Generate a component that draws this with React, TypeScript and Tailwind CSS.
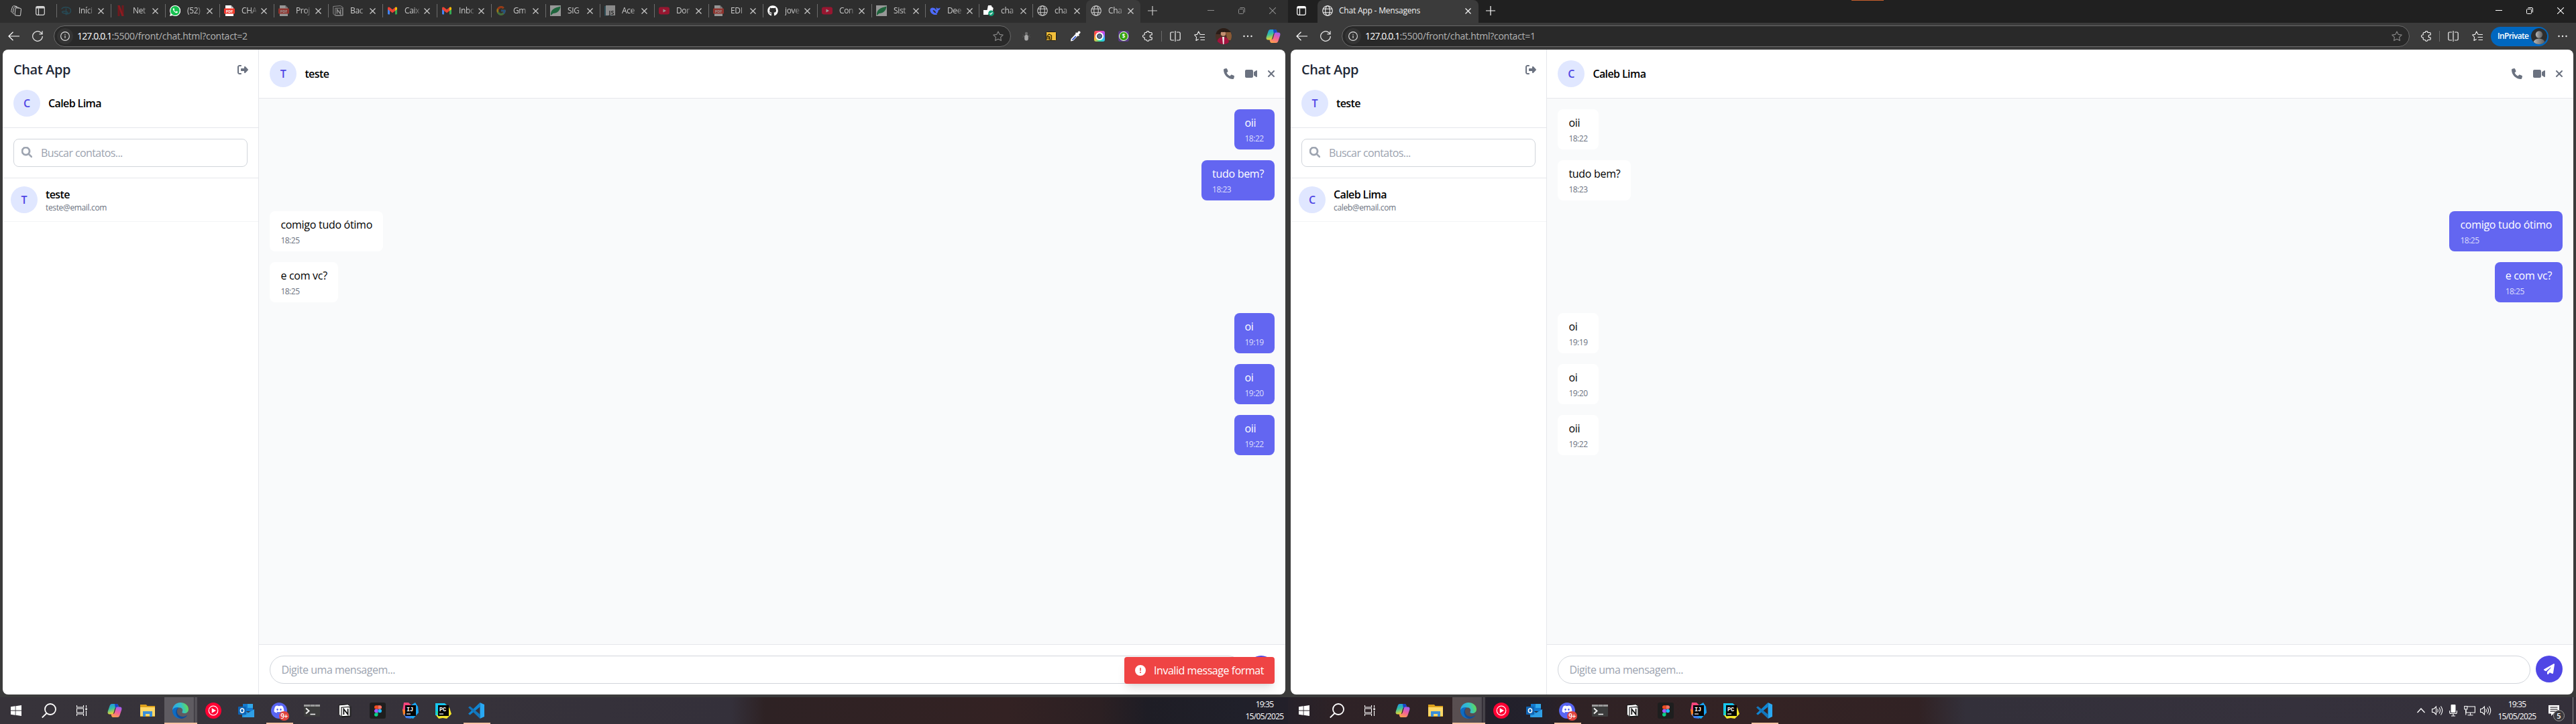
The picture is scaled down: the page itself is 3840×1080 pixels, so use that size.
import React from "react";
import type { ReactNode } from "react";
import {
  FaPhone,
  FaVideo,
  FaXmark,
  FaRightFromBracket,
  FaMagnifyingGlass,
  FaPaperPlane,
  FaCircleExclamation,
  FaGithub,
  FaDiscord,
} from "react-icons/fa6";
import { FcGoogle } from "react-icons/fc";

/* ---------- favicons ---------- */

const Netflix = () => (
  <svg viewBox="0 0 16 16" className="size-4">
    <path d="M3.500 0h3v16h-3z M9.500 0h3v16h-3z" fill="#b1060f" />
    <path d="M3.500 0h3l6 16h-3z" fill="#e50914" />
  </svg>
);
const Disney = () => (
  <svg viewBox="0 0 16 16" className="size-4" fill="none" stroke="#20677e" strokeLinecap="round">
    <path d="M1 5C4 1.500 15 2 14.500 8.500 14 13 8 13.500 6 12" strokeWidth="1.400" />
    <path d="M7.500 5v9M1.500 9.500c0 2.500 7 3.500 8.500 1.500 0-2-6-3-8.500-1.500z" strokeWidth="1.300" />
  </svg>
);
const Whatsapp = () => (
  <svg viewBox="0 0 16 16" className="size-4">
    <path d="M8 0a8 8 0 0 0-6.900 12L0 16l4.200-1.100A8 8 0 1 0 8 0z" fill="#fff" />
    <circle cx="8" cy="8" r="6.900" fill="#16c04f" />
    <path d="M5.500 4.200c-1 .6-1.100 2 .3 4 1.600 2.300 3.700 3.600 5.200 3 1-.5 1-1.500.9-1.700l-1.800-.9-1 1.100c-1-.4-2.100-1.500-2.600-2.500l.7-.9-.8-2z" fill="#fff" />
  </svg>
);
const Pdf = () => (
  <svg viewBox="0 0 16 16" className="size-4">
    <path d="M2 0h8.500L14 3.500V16H2z" fill="#fff" />
    <path d="M10.500 0v3.500H14z" fill="#9a9a9a" />
    <rect x="0" y="4.500" width="16" height="8" rx=".8" fill="#f03a2e" />
    <text x="8" y="10.800" textAnchor="middle" fontSize="5.500" fontWeight="700" fill="#fff" fontFamily="Open Sans, sans-serif">PDF</text>
  </svg>
);
const Notion = () => (
  <svg viewBox="0 0 16 16" className="size-5">
    <path d="M1 1.500 11.500.6 15 3v12l-11 .7L1 12.500z" fill="#fff" stroke="#111" strokeWidth=".8" />
    <path d="M4 4.200 14.300 3.500v11L4 15.100z" fill="#fff" stroke="#111" strokeWidth=".9" />
    <path d="M6.700 12.800V6.200l5 6.300V5.800" fill="none" stroke="#111" strokeWidth="1.400" />
  </svg>
);
const NotionTab = () => (
  <svg viewBox="0 0 16 16" className="size-4">
    <path d="M.8 1.500 11.500.6 15.200 3v12.200l-11 .4L.8 12.500z" fill="none" stroke="#ddd" strokeWidth="1" />
    <path d="M3.800 4.200h10.600v10.600H3.800z" fill="none" stroke="#ddd" strokeWidth="1" />
    <path d="M6.500 12.500V6.200l5 6.300V6" fill="none" stroke="#eee" strokeWidth="1.500" />
  </svg>
);
const Gmail = () => (
  <svg viewBox="0 0 16 16" className="size-4">
    <path d="M1 4.500h3v9H2q-1 0-1-1z" fill="#4285f4" />
    <path d="M15 4.500h-3v9h2q1 0 1-1z" fill="#34a853" />
    <path d="M1 4.200C1 2.500 2.800 2 4 3l4 3.200L12 3v5.200L8 11.200 4 8.200 1 6z" fill="#ea4335" />
    <path d="M12 3c1.200-1 3-.5 3 1.200V6l-3 2.200z" fill="#fbbc04" />
  </svg>
);
const Siga = () => (
  <svg viewBox="0 0 16 16" className="size-4">
    <rect width="16" height="16" fill="#fff" />
    <path d="M1 12C2 6 6 4 15.500 1.500 15 8 10 12 4.500 12L1 15z" fill="#0f9a4a" />
  </svg>
);
const JsFile = () => (
  <svg viewBox="0 0 16 16" className="size-4">
    <path d="M0 1h12v14.500H0z" fill="#2d6f83" />
    <path d="M2 0h14v15H2z" fill="#e8e8e8" />
    <text x="10.500" y="14" textAnchor="middle" fontSize="9" fontWeight="700" fill="#222" fontFamily="Open Sans, sans-serif">JS</text>
  </svg>
);
const Youtube = () => (
  <svg viewBox="0 0 16 16" className="size-4">
    <rect y="2.500" width="16" height="11" rx="3" fill="#ff0033" />
    <path d="M6.500 5.500 11 8l-4.500 2.500z" fill="#fff" />
  </svg>
);
const Deepseek = () => (
  <svg viewBox="0 0 16 16" className="size-4">
    <path d="M.5 7C.5 4 3.500 2.500 6.500 4c1.500.7 2.500 2 3.500 3 .3-1.500-1-2.500-.2-4 .8 1 1.700 1.700 2.900 1.500 1-.1 1.800-.8 2.800-1.100 0 2-1 3.600-2.800 3.800 0 2.800-1.200 4.300-2.700 5.300l1.200 1.300C6.500 15 .5 12.500.5 7z" fill="#4d6bfe" />
    <path d="M4.500 7c2 0 4.500 2 5 4.500C7 11.500 5 9.500 4.500 7z" fill="#2e2e2e" />
  </svg>
);
const ChatCheck = () => (
  <svg viewBox="0 0 16 16" className="size-4">
    <path d="M6.500 2.500a3 3 0 0 1 6-.3c2.600.6 2.500 3 1.600 4.300V9L6.500 14H0V7h5.500z" fill="#fff" />
    <circle cx="11.500" cy="11.700" r="4.300" fill="#0f9d73" />
    <path d="m9.500 11.800 1.400 1.500 2.600-2.800" fill="none" stroke="#fff" strokeWidth="1.200" />
  </svg>
);
const Globe = () => (
  <svg viewBox="0 0 16 16" className="size-4" fill="none" stroke="currentColor" strokeWidth="1.100">
    <circle cx="8" cy="8" r="7.300" />
    <ellipse cx="8" cy="8" rx="3.300" ry="7.300" />
    <path d="M1.300 5.300h13.400M1.300 10.700h13.400" />
  </svg>
);

/* ---------- browser chrome icons ---------- */

const TabClose = ({ className = "" }: { className?: string }) => (
  <svg viewBox="0 0 9 9" className={"size-[9px] shrink-0 " + className} stroke="currentColor" strokeWidth="1.200">
    <path d="M.5.5l8 8M8.500.5l-8 8" />
  </svg>
);
const Workspaces = () => (
  <svg viewBox="0 0 16 16" className="size-4" fill="none" stroke="#d0d0d0" strokeWidth="1">
    <rect x="6.500" y="4" width="8.500" height="11.300" rx="1.800" transform="rotate(6 10 10)" />
    <path d="M4.800 12.800C3 12.500 3 11 3.500 9l1-4.500c.5-2 1.500-2.300 3-2l5 1" />
    <path d="M2.300 10.500C.7 10 .5 9 1 7.500L2.300 3c.6-1.900 1.700-2.500 3.200-2.200l4 1" />
  </svg>
);
const VerticalTabs = ({ className = "" }: { className?: string }) => (
  <svg viewBox="0 0 14 14" className={"size-3.5 " + className} fill="none" stroke="currentColor" strokeWidth="1.200">
    <rect x=".7" y=".7" width="12.600" height="12.600" rx="2.200" />
    <path d="M1 2.300h12" strokeWidth="2.400" />
    <path d="M4.500 3.500v9.500" />
  </svg>
);
const BackArrow = () => (
  <svg viewBox="0 0 17 14" className="h-3.5 w-[17px]" fill="none" stroke="#fff" strokeWidth="1.200">
    <path d="M7.500.7 1 7l6.500 6.300M1 7h16" />
  </svg>
);
const Reload = () => (
  <svg viewBox="0 0 16 16" className="size-4" fill="none" stroke="#e8e8e8" strokeWidth="1.200">
    <path d="M15.300 8A7.300 7.300 0 1 1 12.800 2.500l2 1.800" />
    <path d="M15 .2v4.600h-4.500" />
  </svg>
);
const InfoIcon = () => (
  <svg viewBox="0 0 14 14" className="size-3.5" fill="none" stroke="#e0e0e0" strokeWidth="1.100">
    <circle cx="7" cy="7" r="6.400" />
    <path d="M7 6v4M7 3.700v1.300" />
  </svg>
);
const Star = () => (
  <svg viewBox="0 0 16 16" className="size-4" fill="none" stroke="#858585" strokeWidth="1.100" strokeLinejoin="round">
    <path d="M8 .9 10.200 5.400l5 .7-3.600 3.500.8 5L8 12.200l-4.400 2.400.8-5L.8 6.100l5-.7z" />
  </svg>
);
const Puzzle = () => (
  <svg viewBox="0 0 16 16" className="size-4" fill="none" stroke="#f0f0f0" strokeWidth="1.200" strokeLinejoin="round">
    <path d="M6.200 2.500a1.900 1.900 0 0 1 3.800 0h3q1.200 0 1.200 1.200V6h-1a2 2 0 0 0 0 4h1v2.300q0 1.200-1.200 1.200h-3a1.900 1.900 0 0 1-3.800 0H4.400q-1.200 0-1.200-1.200V10h-.7a2 2 0 0 1 0-4h.7V3.700q0-1.200 1.200-1.200z" />
  </svg>
);
const SplitScreen = () => (
  <svg viewBox="0 0 16 16" className="size-4" fill="none" stroke="#f0f0f0" strokeWidth="1.200">
    <path d="M6 2H2.500Q.8 2 .8 3.700v8.600Q.8 14 2.500 14H6M10 2h3.500q1.700 0 1.700 1.700v8.600q0 1.700-1.700 1.700H10M8 0v16" />
  </svg>
);
const Favorites = () => (
  <svg viewBox="0 0 16 16" className="size-4" fill="none" stroke="#f0f0f0" strokeWidth="1.100" strokeLinejoin="round">
    <path d="M10.500 5.500 9 5.200 6.700.9 4.600 5.400.6 6l3 3.500-.7 5 3.800-2" />
    <path d="M10 5.500h6M8.500 9.500H16M9.500 13.500H16" />
  </svg>
);
const Dots = () => (
  <svg viewBox="0 0 14 4" className="h-1 w-3.5" fill="#f0f0f0">
    <circle cx="1.500" cy="2" r="1.200" />
    <circle cx="7" cy="2" r="1.200" />
    <circle cx="12.500" cy="2" r="1.200" />
  </svg>
);
const Plus = ({ className = "" }: { className?: string }) => (
  <svg viewBox="0 0 14 14" className={"size-3.5 " + className} stroke="currentColor" strokeWidth="1.200">
    <path d="M7 0v14M0 7h14" />
  </svg>
);
const Copilot = ({ id, className }: { id: string; className: string }) => (
  <svg viewBox="0 0 22 22" className={className}>
    <defs>
      <linearGradient id={id + "a"} x1="0" y1="0" x2=".3" y2="1">
        <stop offset="0" stopColor="#1b8ef0" />
        <stop offset=".5" stopColor="#36c0a0" />
        <stop offset="1" stopColor="#f2d52c" />
      </linearGradient>
      <linearGradient id={id + "b"} x1=".7" y1="0" x2=".3" y2="1">
        <stop offset="0" stopColor="#a35df0" />
        <stop offset=".5" stopColor="#f0609a" />
        <stop offset="1" stopColor="#ffa04a" />
      </linearGradient>
    </defs>
    <path d="M7 1h7c1.500 0 2 1 2.400 2.500L17 6h-3c-2 0-2.600 1-3.100 3l-1.600 5.500C8.700 16 8 16.500 6.500 16.500H3.500C.8 16.500 0 14.500.8 12L3.500 4C4.200 2 5 1 7 1z" fill={`url(#${id}a)`} />
    <path d="M11 1h3c1.500 0 2 1 2.400 2.500L17 6h-3c-1 0-1.800.4-2.300 1z" fill="#1746c8" />
    <path d="M15 21H8.500c-1.500 0-2-1-2.400-2.500L5.500 16H8c2 0 2.600-1 3.100-3l1.600-5.500C13.300 6 14 5.500 15.500 5.500h3c2.700 0 3.500 2 2.700 4.500L18.500 18c-.7 2-1.500 3-3.500 3z" fill={`url(#${id}b)`} />
  </svg>
);

/* ---------- tabs ---------- */

type Tab = { icon: ReactNode; label: string; dim?: boolean };
const tabs: Tab[] = [
  { icon: <Disney />, label: "Iníci", dim: true },
  { icon: <Netflix />, label: "Net", dim: true },
  { icon: <Whatsapp />, label: "(52)" },
  { icon: <Pdf />, label: "CHA" },
  { icon: <Pdf />, label: "Proj", dim: true },
  { icon: <NotionTab />, label: "Bac", dim: true },
  { icon: <Gmail />, label: "Caix" },
  { icon: <Gmail />, label: "Inbo" },
  { icon: <FcGoogle className="size-4" />, label: "Gm", dim: true },
  { icon: <Siga />, label: "SIG", dim: true },
  { icon: <JsFile />, label: "Ace", dim: true },
  { icon: <Youtube />, label: "Dor", dim: true },
  { icon: <Pdf />, label: "EDI", dim: true },
  { icon: <FaGithub className="size-4 text-white" />, label: "jove" },
  { icon: <Youtube />, label: "Con", dim: true },
];
const lateTabs: Tab[] = [
  { icon: <Siga />, label: "Sist", dim: true },
  { icon: <Deepseek />, label: "Dee" },
  { icon: <ChatCheck />, label: "cha" },
  { icon: <Globe />, label: "cha" },
];

const Fade = ({ children }: { children: ReactNode }) => (
  <span className="w-[22px] shrink-0 text-[12px] leading-4 tracking-[-0.35px] whitespace-nowrap [mask-image:linear-gradient(to_right,#000_60%,rgba(0,0,0,0.25))]">
    {children}
  </span>
);
const TabItem = ({ tab, width }: { tab: Tab; width: string }) => (
  <div className={"flex h-5 shrink-0 items-center border-l border-[#6c6c6c] pl-1.5 text-[#cacaca] " + width}>
    <span className={tab.dim ? "opacity-50" : ""}>{tab.icon}</span>
    <span className="ml-2.5 flex">
      <Fade>{tab.label}</Fade>
    </span>
    <TabClose className="ml-[7px]" />
  </div>
);

const WindowButtons = ({ tone }: { tone: string }) => (
  <div className={"flex items-center gap-9 " + tone}>
    <svg viewBox="0 0 10 10" className="size-2.5" stroke="currentColor">
      <path d="M0 4.500h10" />
    </svg>
    <svg viewBox="0 0 10 10" className="size-2.5" fill="none" stroke="currentColor">
      <rect x=".5" y="2.500" width="7" height="7" rx="1" />
      <path d="M2.500.5h5.500q1.500 0 1.500 1.500v5.500" />
    </svg>
    <svg viewBox="0 0 10 10" className="size-2.5" stroke="currentColor" strokeWidth="1.100">
      <path d="M0 0l10 10M10 0 0 10" />
    </svg>
  </div>
);

const LeftTabStrip = () => (
  <div className="flex h-[34px] items-center bg-[#2e2e2e] pb-0.5">
    <div className="flex w-[84px] shrink-0 items-center gap-[21px] pl-4">
      <Workspaces />
      <VerticalTabs className="text-[#d8d8d8]" />
    </div>
    {tabs.map((t, i) => (
      <TabItem key={i} tab={t} width="w-[81px]" />
    ))}
    {lateTabs.map((t, i) => (
      <TabItem key={i} tab={t} width="w-20" />
    ))}
    <div className="-mb-0.5 flex h-[34px] w-[81px] shrink-0 items-center rounded-t-lg bg-[#3b3b3b] pb-0.5 pl-[7px] text-[#cfcfcf]">
      <Globe />
      <span className="ml-2.5 flex">
        <Fade>Cha</Fade>
      </span>
      <TabClose className="ml-[7px]" />
    </div>
    <Plus className="ml-[11px] text-[#c9c9c9]" />
    <div className="ml-auto pr-[18px]">
      <WindowButtons tone="text-[#8a8a8a]" />
    </div>
  </div>
);

const RightTabStrip = () => (
  <div className="flex h-[34px] items-center bg-[#202020] pb-0.5">
    <div className="w-11 shrink-0 pl-[13px]">
      <VerticalTabs className="text-white" />
    </div>
    <div className="-mb-0.5 flex h-[34px] w-[240px] shrink-0 items-center rounded-t-lg bg-[#3b3b3b] pr-[11px] pb-0.5 pl-[7px] text-[#f4f4f4]">
      <Globe />
      <span className="ml-[9px] text-[12px] leading-4 tracking-[-0.2px] whitespace-nowrap">Chat App - Mensagens</span>
      <TabClose className="ml-auto" />
    </div>
    <Plus className="ml-[11px] text-white" />
    <div className="ml-auto pr-[18px]">
      <WindowButtons tone="text-white" />
    </div>
  </div>
);

/* ---------- toolbar ---------- */

const AddressBar = ({ contact }: { contact: number }) => (
  <>
    <div className="flex w-20 shrink-0 items-center gap-[19px] pl-3">
      <BackArrow />
      <Reload />
    </div>
    <div className="flex h-8 flex-1 items-center rounded-full border border-[#6a6a6a] bg-[#292929] pr-2.5 pl-1">
      <span className="flex size-6 items-center justify-center rounded-full bg-[#343434]">
        <InfoIcon />
      </span>
      <span className="ml-1.5 text-[14px] leading-5 whitespace-nowrap text-[#b4b4b4]">
        <span className="tracking-[-0.85px] text-white">127.0.0.1</span>
        <span className="tracking-[-0.26px]">:5500/front/chat.html?contact={contact}</span>
      </span>
      <span className="ml-auto">
        <Star />
      </span>
    </div>
  </>
);

const Bug = () => (
  <svg viewBox="0 0 16 16" className="size-4">
    <path d="M2.500 5.500 5 8 2 9.500M13.500 5.500 11 8l3 1.500" stroke="#555" fill="none" />
    <circle cx="8" cy="4" r="2.200" fill="#6c6c6c" />
    <rect x="5.200" y="6" width="5.600" height="8.500" rx="2.800" fill="#a8a8a8" />
  </svg>
);
const YellowBox = () => (
  <svg viewBox="0 0 16 14" className="h-3.5 w-4">
    <rect x=".5" y=".5" width="15" height="13" rx="1" fill="#f2bf3b" stroke="#1c1c1c" />
    <path d="M2 12V7.500h2.500V12M2 6.500 5 4l3.500 2V12H6V7" fill="none" stroke="#2d2100" strokeWidth="1.200" />
  </svg>
);
const Dropper = () => (
  <svg viewBox="0 0 16 16" className="size-4">
    <path d="m9.500 3.500 3 3-7.800 8.300L1 15.500l.7-3.700z" fill="#fff" />
    <path d="m8.300 7.500 1.200 1.200-4.700 5-1.800.3.500-1.800z" fill="#3455c8" />
    <path d="m8 3.500 1.200-1.300 1.500 1 1.800-2.400C14-.5 16.500 1.500 15.300 3.200L13 5.500l1 1.300L12.700 8z" fill="#fff" />
  </svg>
);
const Lens = () => (
  <span className="flex size-4 items-center justify-center rounded-[3px] bg-[conic-gradient(#ff4fa0,#b04fff,#30c0ff,#30e0a0,#ffc030,#ff5040,#ff4fa0)]">
    <span className="flex size-3 items-center justify-center rounded-full bg-white">
      <span className="size-2 rounded-full border border-[#2b3646] bg-[#5c6e88]" />
    </span>
  </span>
);
const Money = () => (
  <span className="flex size-4 items-center justify-center rounded-[3px] bg-[#5a3c86]">
    <span className="flex size-3.5 items-center justify-center rounded-full border border-white bg-[#36a10f] text-[8px] leading-none font-bold text-white">$</span>
  </span>
);
const Photo = () => (
  <svg viewBox="0 0 24 24" className="size-6">
    <defs>
      <clipPath id="profile">
        <circle cx="12" cy="12" r="12" />
      </clipPath>
    </defs>
    <g clipPath="url(#profile)">
      <rect width="24" height="24" fill="#4a3026" />
      <rect width="24" height="9" fill="#2a1d17" />
      <path d="M15 6h9v12h-6z" fill="#8a5a35" />
      <circle cx="11.500" cy="8" r="3.800" fill="#c58f70" />
      <path d="M7.500 6.500C8 3 15 3 15.500 6.500l-1-.8H8.500z" fill="#120c0a" />
      <path d="M2 24c0-7 3-11 9.500-11S20 17 20 24z" fill="#a3123f" />
      <path d="M10 13h3l-.5 11h-1.500z" fill="#f2e6e6" />
    </g>
  </svg>
);
const Divider = () => <span className="h-4 w-px bg-[#6a6a6a]" />;

const LeftToolbar = () => (
  <div className="flex h-10 items-center bg-[#3b3b3b]">
    <AddressBar contact={2} />
    <div className="flex w-[413px] shrink-0 items-center pl-[15px]">
      <Bug />
      <span className="ml-[21px] flex w-4"><YellowBox /></span>
      <span className="ml-5 flex"><Dropper /></span>
      <span className="ml-5 flex"><Lens /></span>
      <span className="ml-5 flex"><Money /></span>
      <span className="ml-5 flex"><Puzzle /></span>
      <span className="ml-3 flex"><Divider /></span>
      <span className="ml-3 flex"><SplitScreen /></span>
      <span className="ml-5 flex"><Favorites /></span>
      <span className="ml-4 flex"><Photo /></span>
      <span className="ml-[17px] flex"><Dots /></span>
      <span className="ml-5 flex"><Copilot id="tb" className="size-[22px]" /></span>
    </div>
  </div>
);

const RightToolbar = () => (
  <div className="flex h-10 items-center bg-[#3b3b3b]">
    <AddressBar contact={1} />
    <div className="flex w-[248px] shrink-0 items-center pl-[17px]">
      <Puzzle />
      <span className="ml-[11px] flex"><Divider /></span>
      <span className="ml-3 flex"><SplitScreen /></span>
      <span className="ml-5 flex"><Favorites /></span>
      <div className="ml-3 flex h-[29px] w-[86px] items-center justify-between rounded-full bg-[#0067bf] pr-0.5 pl-2.5">
        <span className="text-[12px] leading-4 font-semibold tracking-[-0.65px] text-white">InPrivate</span>
        <svg viewBox="0 0 24 24" className="size-6">
          <defs>
            <linearGradient id="inp" x1="0" x2="1">
              <stop offset="0" stopColor="#b5b5b5" />
              <stop offset="1" stopColor="#5c5c5c" />
            </linearGradient>
            <clipPath id="inpClip">
              <circle cx="12" cy="12" r="12" />
            </clipPath>
          </defs>
          <g clipPath="url(#inpClip)">
            <rect width="24" height="24" fill="#2d2d2d" />
            <circle cx="12" cy="9.500" r="5.200" fill="url(#inp)" />
            <ellipse cx="12" cy="21.500" rx="8.500" ry="6" fill="url(#inp)" />
          </g>
        </svg>
      </div>
      <span className="ml-3.5 flex"><Dots /></span>
    </div>
  </div>
);

/* ---------- chat application ---------- */

type Message = { text: string; time: string; mine: boolean };
const Avatar = ({ letter }: { letter: string }) => (
  <div className="flex size-10 shrink-0 items-center justify-center rounded-full bg-[#e0e7ff] font-semibold text-[#4f46e5]">
    {letter}
  </div>
);

const Bubble = ({ m }: { m: Message }) => (
  <div
    className={
      "flex min-w-[60.5px] flex-col rounded-lg px-4 py-2 " +
      (m.mine ? "self-end bg-[#6366f1] text-white" : "self-start bg-white text-black")
    }
  >
    <span className="text-[16px] leading-6 tracking-[-0.29px] whitespace-nowrap">{m.text}</span>
    <span
      className={
        "mt-1 w-7 text-[12px] leading-4 tracking-[-0.5px] whitespace-nowrap " +
        (m.mine ? "text-[#dcddfc]" : "text-[#6b7280]")
      }
    >
      {m.time}
    </span>
  </div>
);

type ChatProps = {
  user: string;
  contact: string;
  email: string;
  messages: Message[];
  toast?: string;
};
const Chat = ({ user, contact, email, messages, toast }: ChatProps) => (
  <div className="relative flex h-[962px] overflow-hidden rounded-lg bg-white">
    <aside className="flex w-[382.4px] shrink-0 flex-col border-r border-[#e5e7eb]">
      <div className="border-b border-[#e5e7eb] p-4">
        <div className="flex justify-between">
          <h1 className="text-[20px] leading-7 font-semibold tracking-[-0.4px] text-[#1f2937]">Chat App</h1>
          <FaRightFromBracket className="mt-1.5 -mr-px size-4 text-[#6b7280]" />
        </div>
        <div className="mt-4 flex items-center gap-3">
          <Avatar letter={user[0].toUpperCase()} />
          <span className="font-semibold tracking-[-0.6px] text-black">{user}</span>
        </div>
      </div>
      <div className="border-b border-[#e5e7eb] p-4">
        <div className="flex h-[42px] items-center rounded-lg border border-[#d1d5db] pl-[11px]">
          <FaMagnifyingGlass className="mb-0.5 size-4 stroke-[#9ca3af] stroke-[24px] text-[#9ca3af]" />
          <span className="ml-[13px] tracking-[-0.59px] text-[#9ca3af]">Buscar contatos...</span>
        </div>
      </div>
      <div className="flex items-center gap-3 border-b border-[#f3f4f6] p-3">
        <Avatar letter={contact[0].toUpperCase()} />
        <div className="flex flex-col">
          <span className="leading-6 font-semibold tracking-[-0.6px] text-black">{contact}</span>
          <span className="text-[12px] leading-4 tracking-[-0.35px] text-[#6b7280]">{email}</span>
        </div>
      </div>
    </aside>
    <main className="flex min-w-0 flex-1 flex-col">
      <div className="flex h-[73px] shrink-0 items-center justify-between border-b border-[#e5e7eb] px-4">
        <div className="flex items-center gap-3">
          <Avatar letter={contact[0].toUpperCase()} />
          <span className="font-semibold tracking-[-0.6px] text-black">{contact}</span>
        </div>
        <div className="flex items-center gap-4 text-[#6b7280]">
          <FaPhone className="size-4" />
          <FaVideo className="h-4 w-[18px]" />
          <FaXmark className="-mx-[3px] size-4" />
        </div>
      </div>
      <div className="flex flex-1 flex-col gap-4 bg-[#f9fafb] p-4">
        {messages.map((m, i) => (
          <Bubble key={i} m={m} />
        ))}
      </div>
      <div className="flex items-start gap-2 border-t border-[#e5e7eb] p-4">
        <div className="flex h-[42px] flex-1 items-center rounded-full border border-[#d1d5db] px-4">
          <span className="tracking-[-0.48px] text-[#9ca3af]">Digite uma mensagem...</span>
        </div>
        <div className="flex size-10 items-center justify-center rounded-full bg-[#4f46e5] text-white">
          <FaPaperPlane className="size-4" />
        </div>
      </div>
    </main>
    {toast && (
      <div className="absolute right-4 bottom-4 flex h-10 w-56 items-center rounded bg-[#ef4444] pl-4 text-white shadow-lg">
        <FaCircleExclamation className="size-4" />
        <span className="ml-3 tracking-[-0.45px] whitespace-nowrap">{toast}</span>
      </div>
    )}
  </div>
);

/* ---------- taskbar ---------- */

const Windows = () => (
  <svg viewBox="0 0 16 16" className="size-4" fill="#fff">
    <path d="M0 2.200 6.700 1.300v6.300H0zM7.500 1.200 16 0v7.600H7.500zM0 8.400h6.700v6.300L0 13.800zM7.500 8.400H16V16l-8.500-1.200z" />
  </svg>
);
const SearchGlyph = () => (
  <svg viewBox="0 0 22 22" className="size-[22px]" fill="none" stroke="#fff" strokeWidth="1.800">
    <circle cx="13" cy="9" r="8" />
    <path d="M7.500 15 .8 21.500" />
  </svg>
);
const TaskView = () => (
  <svg viewBox="0 0 16 16" className="size-4" fill="none" stroke="#fff" strokeWidth="1.100">
    <path d="M.5 0v3h10V0M.5 16v-3h10v3M.5 5h10v6H.5zM14.500 0v3.500M14.500 8v8" />
    <rect x="13.300" y="4.500" width="2.500" height="2.500" fill="#fff" stroke="none" />
  </svg>
);
const Folder = () => (
  <svg viewBox="0 0 22 20" className="h-5 w-[22px]">
    <path d="M0 1h9l1.500 2H22v16H0z" fill="#dda11c" />
    <path d="M0 5h22v13H0z" fill="#ffd867" />
    <path d="M4 19v-8h14v8h-4v-4H8v4z" fill="#3b8fd9" />
  </svg>
);
const Edge = ({ id }: { id: string }) => (
  <svg viewBox="0 0 24 24" className="size-6">
    <defs>
      <linearGradient id={id} x1="0" y1=".5" x2="1" y2=".3">
        <stop offset="0" stopColor="#2ba5e8" />
        <stop offset=".55" stopColor="#35c1c8" />
        <stop offset="1" stopColor="#66dd48" />
      </linearGradient>
    </defs>
    <path d="M0 12C0 5 5 0 12 0s12 4.500 12 10c0 4-3 6-6 6-2.500 0-4-1-3.500-2 1.500-2 1-6-3.500-6.500C5.500 7 1 9.500 0 12z" fill={`url(#${id})`} />
    <path d="M0 12c.5-3.500 5-5.500 9.500-4.500C6 9 5 15 9 19s9.500 3.500 12.800.5C20 22.300 16.500 24 12 24 5.500 24 0 19 0 12z" fill="#0d6cc4" />
    <path d="M9.500 8C6 10 6 15 9 18.500c3 3 8.500 3.500 13 .2-.8 2.300-5 5.300-9 5.300C4 22 3 10 9.500 8z" fill="#124c94" />
  </svg>
);
const YtMusic = () => (
  <svg viewBox="0 0 24 24" className="size-6">
    <circle cx="12" cy="12" r="12" fill="#ff0033" />
    <circle cx="12" cy="12" r="6.800" fill="none" stroke="#fff" strokeWidth="1.200" />
    <path d="m9.700 8.200 6.300 3.800-6.300 3.800z" fill="#fff" />
  </svg>
);
const Outlook = () => (
  <svg viewBox="0 0 24 22" className="h-[22px] w-6">
    <path d="M7 1h15v11H7z" fill="#1379cf" />
    <path d="M14 1h8v6h-8z" fill="#31a8ea" />
    <path d="M6 9l9 5 9-5v12H6z" fill="#2391dd" />
    <path d="m6 21 18-12v12z" fill="#2f9fe6" />
    <rect y="5" width="12" height="12" rx="1" fill="#0f64b4" />
    <ellipse cx="6" cy="11" rx="2.600" ry="3" fill="none" stroke="#fff" strokeWidth="1.500" />
  </svg>
);
const Discord = () => (
  <span className="relative flex size-6 items-center justify-center rounded-full bg-[#5865f2]">
    <FaDiscord className="mb-1 size-4 text-white" />
    <span className="absolute -right-[3px] -bottom-[3px] flex h-3.5 w-[15px] items-center justify-center rounded-full bg-[#e0443f] text-[10px] leading-none font-semibold tracking-[-0.5px] text-white">
      9+
    </span>
  </span>
);
const Terminal = () => (
  <svg viewBox="0 0 24 20" className="h-5 w-6">
    <rect y="1" width="24" height="18" rx="1" fill="#3c3c3c" />
    <path d="M0 1h24v3H0z" fill="#9b9b9b" />
    <path d="M9 1h.8v3H9zM16 1h.8v3H16z" fill="#666" />
    <path d="m3 6.500 4.500 4L3 14.500" fill="none" stroke="#f0f0f0" strokeWidth="2" />
    <path d="M9.500 15.500h7.500" stroke="#f0f0f0" strokeWidth="1.600" />
  </svg>
);
const Figma = () => (
  <span className="flex size-6 items-center justify-center rounded-[3px] bg-[#1e1e1e]">
    <svg viewBox="0 0 12 18" className="h-[17px] w-[11px]">
      <path d="M3 0h3v6H3a3 3 0 0 1 0-6z" fill="#f24e1e" />
      <path d="M6 0h3a3 3 0 0 1 0 6H6z" fill="#ff7262" />
      <path d="M3 6h3v6H3a3 3 0 0 1 0-6z" fill="#a259ff" />
      <circle cx="9" cy="9" r="3" fill="#1abcfe" />
      <path d="M3 12h3v3a3 3 0 1 1-3-3z" fill="#0acf83" />
    </svg>
  </span>
);
const Jetbrains = ({ letters, pycharm }: { letters: string; pycharm?: boolean }) => (
  <svg viewBox="0 0 24 24" className="size-6">
    {pycharm ? (
      <>
        <path d="M0 1h14l6 6-5 12H0z" fill="#16c8f0" />
        <path d="M18 5l3 3 3 9-7 7-6-1-6 1-4-5 13-2z" fill="#f6e628" />
        <path d="M0 12l5 9 8-3z" fill="#2bdd8a" />
      </>
    ) : (
      <>
        <path d="M2 0h7l5 5-6 12-8-5z" fill="#f5457c" />
        <path d="M11 5l8-5 4 6 1 9-8 9-7-2z" fill="#18a6f5" />
        <path d="M0 10l6 2 6 11-7-2-4-3z" fill="#fb7d25" />
        <path d="M2 17l8 1 3 6-8-1z" fill="#3d7df0" />
      </>
    )}
    <rect x="4" y="4" width="16" height="16" fill="#050505" />
    <text x="6" y="12.500" fontSize="8.500" fontWeight="700" fill="#fff" fontFamily="Liberation Mono, monospace">{letters}</text>
    <path d="M6 17h6" stroke="#fff" strokeWidth="1.200" />
  </svg>
);
const VsCode = () => (
  <svg viewBox="0 0 24 24" className="size-6">
    <path d="M17.500 0 24 3v18l-6.500 3z" fill="#29a8f2" />
    <path d="M17.500 0v6.500L2.500 18.500 0 16.800z" fill="#0f86d4" />
    <path d="M17.500 24v-6.500L2.500 5.500 0 7.200z" fill="#1377bd" />
  </svg>
);

type Task = { icon: ReactNode; open?: boolean };
const TaskIcons = ({ id }: { id: string }) => {
  const items: Task[] = [
    { icon: <Windows /> },
    { icon: <SearchGlyph /> },
    { icon: <TaskView /> },
    { icon: <Copilot id={id + "c"} className="size-[22px]" /> },
    { icon: <Folder /> },
  ];
  const rest: Task[] = [
    { icon: <YtMusic /> },
    { icon: <Outlook /> },
    { icon: <Discord />, open: true },
    { icon: <Terminal /> },
    { icon: <Notion /> },
    { icon: <Figma /> },
    { icon: <Jetbrains letters="IJ" /> },
    { icon: <Jetbrains letters="PC" pycharm /> },
    { icon: <VsCode />, open: true },
  ];
  const cell = (t: Task, i: number) => (
    <div key={i} className="flex h-10 w-[49px] shrink-0 flex-col items-center">
      <div className="flex flex-1 items-center pr-px">{t.icon}</div>
      {t.open && <div className="-mt-0.5 h-0.5 w-10 bg-[#fcc3a4]" />}
    </div>
  );
  return (
    <>
      {items.map(cell)}
      <div className="flex h-10 w-[49px] shrink-0 flex-col border-b-2 border-[#fcc3a4]">
        <div className="flex flex-1">
          <div className="flex w-11 items-center bg-white/20 pt-0.5 pl-3">
            <Edge id={id + "e"} />
          </div>
          <div className="ml-px w-1 bg-white/15" />
        </div>
      </div>
      {rest.map(cell)}
    </>
  );
};

const Clock = ({ className }: { className: string }) => (
  <div className={"flex w-[58px] shrink-0 flex-col items-center text-[12px] text-white " + className}>
    <span className="leading-[18px] tracking-[-0.85px]">19:35</span>
    <span className="leading-[18px] tracking-[-0.65px]">15/05/2025</span>
  </div>
);
const Speaker = () => (
  <svg viewBox="0 0 17 16" className="h-4 w-[17px]" fill="none" stroke="#fff" strokeWidth="1.100">
    <path d="M.6 5.500h2.500L6.500 2v12L3.100 10.500H.6zM8.500 5.500q1.500 2.500 0 5M11 3.500q3 4.500 0 9M13.500 1.500q4.500 6.500 0 13" />
  </svg>
);

const LeftTaskbar = () => (
  <div className="flex h-10 items-center bg-[linear-gradient(to_right,#37333a_0px,#36323a_700px,#34303a_1090px,#2e2224_1140px,#332223_1500px,#2c2023_1640px,#1e1d25_1710px,#20202a_1850px,#23202a_1920px)]">
    <TaskIcons id="l" />
    <Clock className="mr-1.5 ml-auto" />
  </div>
);
const RightTaskbar = () => (
  <div className="flex h-10 items-center bg-[linear-gradient(to_right,#26212a_0px,#2e2226_70px,#302326_260px,#22202a_300px,#23212c_370px,#2f2225_430px,#342324_700px,#312224_940px,#33303a_1010px,#35313c_1500px,#34303a_1920px)]">
    <TaskIcons id="r" />
    <div className="ml-auto flex h-10 items-center">
      <svg viewBox="0 0 12 8" className="h-2 w-3" fill="none" stroke="#fff" strokeWidth="1.300">
        <path d="m.5 7 5.500-6 5.500 6" />
      </svg>
      <span className="ml-2.5 flex"><Speaker /></span>
      <svg viewBox="0 0 12 18" className="ml-[9px] h-[18px] w-3">
        <rect x="2.500" width="7" height="12" rx="1" fill="#fff" />
        <path d="M.6 9v2.500q0 2 2 2h6.800q2 0 2-2V9M6 13.500v3M3 17h6" fill="none" stroke="#fff" strokeWidth="1.100" />
      </svg>
      <svg viewBox="0 0 17 16" className="ml-2.5 h-4 w-[17px]" fill="none" stroke="#fff" strokeWidth="1.100">
        <path d="M5 2h11.400v9H3V7M9.500 11v3.500M5.500 14.800h8" />
        <path d="M.8 1.500h4V6h-4zM2.800 6v8.500" />
      </svg>
      <span className="ml-[7px] flex"><Speaker /></span>
      <Clock className="ml-[9px]" />
      <div className="relative ml-[18px] size-4">
        <svg viewBox="0 0 16 16" className="size-4">
          <path d="M0 0h16v12.500H7.500L4 16v-3.500H0z" fill="#fff" />
          <path d="M2.500 3.200h11M2.500 6.200h11M2.500 9.200h11" stroke="#37333a" strokeWidth="1.200" />
        </svg>
        <span className="absolute top-[7px] left-[7px] flex size-[17px] items-center justify-center rounded-full border border-[#9c9c9c] bg-[#3a383c] text-[11px] leading-none font-semibold text-white">
          5
        </span>
      </div>
      <div className="ml-5 h-10 w-px bg-[#8a888c]" />
      <div className="w-1" />
    </div>
  </div>
);

/* ---------- screens ---------- */

const left: Message[] = [
  { text: "oii", time: "18:22", mine: true },
  { text: "tudo bem?", time: "18:23", mine: true },
  { text: "comigo tudo ótimo", time: "18:25", mine: false },
  { text: "e com vc?", time: "18:25", mine: false },
  { text: "oi", time: "19:19", mine: true },
  { text: "oi", time: "19:20", mine: true },
  { text: "oii", time: "19:22", mine: true },
];
const right: Message[] = left.map((m) => ({ ...m, mine: !m.mine }));

export default function App() {
  return (
    <div className="flex h-[1080px] w-[3840px] overflow-hidden bg-[#3b3b3b] font-['Open_Sans','Noto_Sans',sans-serif] text-[16px] leading-6">
      <div className="flex w-[1920px] shrink-0 flex-col">
        <LeftTabStrip />
        <LeftToolbar />
        <div className="h-[966px] px-1">
          <Chat user="Caleb Lima" contact="teste" email="teste@email.com" messages={left} toast="Invalid message format" />
        </div>
        <LeftTaskbar />
      </div>
      <div className="relative flex w-[1920px] shrink-0 flex-col">
        <RightTabStrip />
        <RightToolbar />
        <div className="h-[966px] px-1">
          <Chat user="teste" contact="Caleb Lima" email="caleb@email.com" messages={right} />
        </div>
        <RightTaskbar />
        <div className="absolute top-0 left-[840px] h-px w-12 bg-[#c8602e]" />
      </div>
    </div>
  );
}
